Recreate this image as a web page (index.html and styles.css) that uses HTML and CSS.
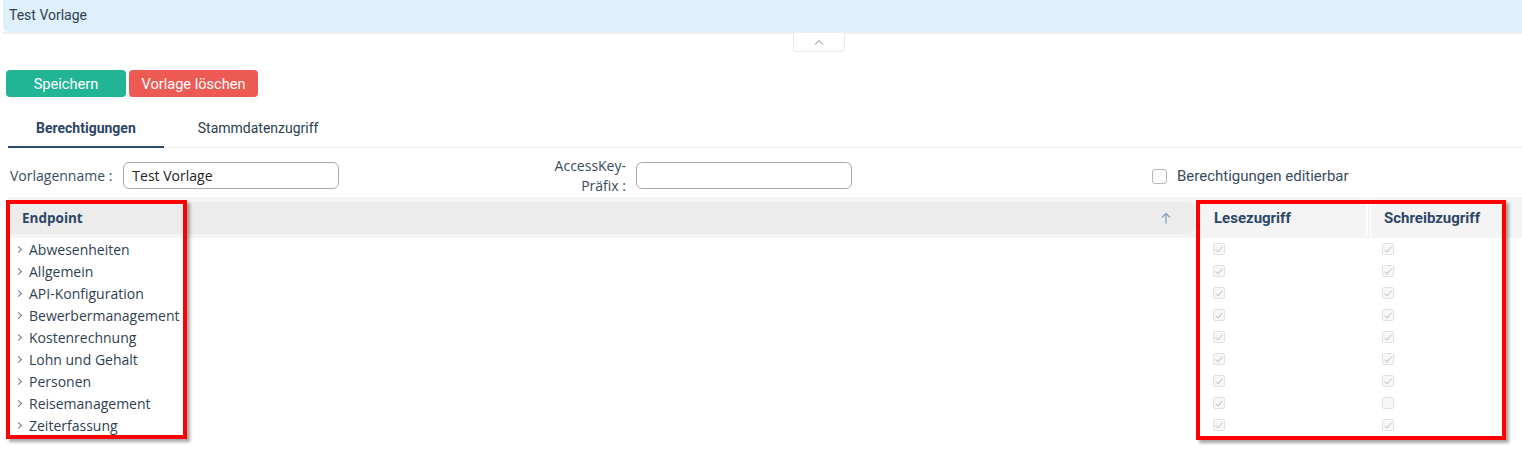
FILE: index.html
```html
<!DOCTYPE html>
<html lang="de">
<head>
<meta charset="utf-8">
<title>Test Vorlage</title>
<link rel="stylesheet" href="styles.css">
</head>
<body>
<div class="page">
  <div class="topbar"><span class="topbar-title">Test Vorlage</span></div>
  <div class="collapse-row">
    <div class="collapse-tab">
      <svg width="10" height="6" viewBox="0 0 10 6"><polyline points="1,5.5 5,1.5 9,5.5" fill="none" stroke="#7a8797" stroke-width="1"/></svg>
    </div>
  </div>

  <div class="actions">
    <button class="btn btn-save">Speichern</button>
    <button class="btn btn-delete">Vorlage löschen</button>
  </div>

  <div class="tabs">
    <div class="tab tab-active">Berechtigungen</div>
    <div class="tab tab-second">Stammdatenzugriff</div>
  </div>

  <div class="form-row">
    <div class="field field-name">
      <label class="field-label">Vorlagenname :</label>
      <div class="input">Test Vorlage</div>
    </div>
    <div class="field field-key">
      <label class="field-label label-wrap">AccessKey-<br>Präfix :</label>
      <div class="input"></div>
    </div>
    <div class="check-field">
      <span class="box"></span>
      <span class="check-label">Berechtigungen editierbar</span>
    </div>
  </div>

  <div class="grid">
    <div class="grid-head">
      <div class="th th-endpoint">
        <span>Endpoint</span>
        <svg class="sort" width="10" height="12" viewBox="0 0 10 12"><line x1="5" y1="1.5" x2="5" y2="11.5" stroke="#8ea0b3" stroke-width="1.3"/><polyline points="1,5.5 5,1.5 9,5.5" fill="none" stroke="#8ea0b3" stroke-width="1.3"/></svg>
      </div>
      <div class="th th-read">Lesezugriff</div>
      <div class="th th-write">Schreibzugriff</div>
    </div>

    <div class="grid-body">
      <div class="row"><div class="cell-name"><span class="chev"></span>Abwesenheiten</div><div class="cell-read"><span class="cbx on"></span></div><div class="cell-write"><span class="cbx on"></span></div></div>
      <div class="row"><div class="cell-name"><span class="chev"></span>Allgemein</div><div class="cell-read"><span class="cbx on"></span></div><div class="cell-write"><span class="cbx on"></span></div></div>
      <div class="row"><div class="cell-name"><span class="chev"></span>API-Konfiguration</div><div class="cell-read"><span class="cbx on"></span></div><div class="cell-write"><span class="cbx on"></span></div></div>
      <div class="row"><div class="cell-name"><span class="chev"></span>Bewerbermanagement</div><div class="cell-read"><span class="cbx on"></span></div><div class="cell-write"><span class="cbx on"></span></div></div>
      <div class="row"><div class="cell-name"><span class="chev"></span>Kostenrechnung</div><div class="cell-read"><span class="cbx on"></span></div><div class="cell-write"><span class="cbx on"></span></div></div>
      <div class="row"><div class="cell-name"><span class="chev"></span>Lohn und Gehalt</div><div class="cell-read"><span class="cbx on"></span></div><div class="cell-write"><span class="cbx on"></span></div></div>
      <div class="row"><div class="cell-name"><span class="chev"></span>Personen</div><div class="cell-read"><span class="cbx on"></span></div><div class="cell-write"><span class="cbx on"></span></div></div>
      <div class="row"><div class="cell-name"><span class="chev"></span>Reisemanagement</div><div class="cell-read"><span class="cbx on"></span></div><div class="cell-write"><span class="cbx"></span></div></div>
      <div class="row"><div class="cell-name"><span class="chev"></span>Zeiterfassung</div><div class="cell-read"><span class="cbx on"></span></div><div class="cell-write"><span class="cbx on"></span></div></div>
    </div>
  </div>

  <div class="mark mark-left"></div>
  <div class="mark mark-right"></div>
</div>
</body>
</html>
```
FILE: styles.css
```css
* { box-sizing: border-box; }
html, body { margin: 0; padding: 0; background: #fff; }
body { font-family: Roboto, "Open Sans", sans-serif; color: #2c3e50; width: 1522px; height: 449px; overflow: hidden; }
.page { position: relative; width: 1522px; height: 449px; }

.topbar {
  margin-left: 3px;
  height: 32px;
  background: #dff0fd;
  border-bottom-left-radius: 6px;
  display: flex;
  align-items: center;
  padding: 0 0 2px 6px;
}
.topbar-title { font-size: 14px; color: #2f4155; }

.collapse-row {
  margin-left: 3px;
  border-top: 2px solid #eeeeee;
  height: 20px;
  display: flex;
  padding-left: 790px;
}
.collapse-tab {
  width: 52px;
  height: 19px;
  margin-top: -1px;
  border: 1px solid #e8e8e8;
  border-top: none;
  border-radius: 0 0 4px 4px;
  background: #fff;
  display: flex;
  align-items: center;
  justify-content: center;
}

.actions { display: flex; gap: 3px; padding-left: 6px; margin-top: 18px; }
.btn {
  height: 27px;
  border: none;
  border-radius: 4px;
  color: #fff;
  font-family: Roboto, sans-serif;
  font-size: 14.6px;
  padding: 0 12px;
  cursor: pointer;
}
.btn-save { background: #21b596; width: 120px; }
.btn-delete { background: #ec5a53; width: 129px; }

.tabs {
  display: flex;
  margin: 13px 0 0 8px;
  height: 38px;
  border-bottom: 1px solid #eeeeee;
}
.tab {
  font-size: 14px;
  color: #2c3e50;
  display: flex;
  align-items: center;
  padding: 0 34px 2px;
}
.tab-active {
  font-weight: 700;
  color: #2c4565;
  padding: 0 28px 0;
  border-bottom: 2px solid #2c4a6e;
  margin-bottom: -1px;
}

.form-row {
  display: flex;
  align-items: center;
  height: 48px;
  padding: 6px 0 0 10px;
  font-family: "Open Sans", sans-serif;
}
.field { display: flex; align-items: center; }
.field-name { width: 507px; }
.field-label { font-size: 14px; color: #3a4b5e; }
.field-name .field-label { margin-right: 11px; }
.label-wrap { width: 109px; text-align: right; line-height: 20px; margin-right: 10px; padding-top: 2px; }
.input {
  width: 216px;
  height: 27px;
  border: 1px solid #a9a9a9;
  border-radius: 6px;
  font-size: 14px;
  color: #222;
  padding-left: 8px;
  display: flex;
  align-items: center;
}
.check-field { display: flex; align-items: center; margin-left: 300px; padding-top: 2px; }
.box {
  width: 15px; height: 15px;
  border: 1px solid #b8b8b8;
  border-radius: 3px;
  margin-right: 10px;
}
.check-label { font-family: Roboto, sans-serif; font-size: 15px; color: #3a4b5e; }

.grid { margin: 1px 0 0 8px; width: 1514px; }
.grid-head {
  display: grid;
  grid-template-columns: 1192px 170px 1fr;
  height: 41px;
  background: #f4f4f4;
  align-items: center;
}
.th { font-family: Roboto, sans-serif; font-weight: 700; font-size: 15px; color: #2d4766; }
.th-endpoint {
  font-family: "Open Sans", sans-serif;
  font-size: 13.5px;
  background: #ececec;
  height: 32px;
  margin-right: 5px;
  border-radius: 0 8px 8px 0;
  display: flex;
  align-items: center;
  justify-content: space-between;
  padding: 0 24px 0 14px;
}
.sort { display: block; }
.th-read {
  height: 41px;
  display: flex;
  align-items: center;
  padding-left: 14px;
  border-right: 2px solid #fff;
  border-radius: 0 6px 6px 0;
  margin-right: 2px;
}
.th-write {
  height: 41px;
  display: flex;
  align-items: center;
  padding-left: 13px;
  border-left: 1px solid #fff;
}

.row {
  display: grid;
  grid-template-columns: 1192px 170px 1fr;
  height: 22px;
  align-items: center;
}
.cell-name {
  font-family: "Open Sans", sans-serif;
  font-size: 14px;
  color: #2f3f52;
  display: flex;
  align-items: center;
  padding-left: 8px;
}
.chev {
  width: 5px; height: 5px;
  border-top: 1px solid #777;
  border-right: 1px solid #777;
  transform: rotate(45deg);
  margin-right: 8px;
  margin-top: 1px;
}
.cell-read { padding-left: 13px; display: flex; }
.cell-write { padding-left: 12px; display: flex; }
.cbx {
  width: 12px; height: 12px;
  border: 1px solid #e2e2e2;
  background: #f7f7f7;
  border-radius: 2px;
  position: relative;
}
.cbx.on::after {
  content: "";
  position: absolute;
  left: 3px; top: 1px;
  width: 3px; height: 6px;
  border-right: 1px solid #c8c8c8;
  border-bottom: 1px solid #c8c8c8;
  transform: rotate(40deg);
}

.mark {
  position: absolute;
  border: 4px solid #ff0000;
  box-shadow: 3px 3px 3px rgba(0,0,0,0.35);
  pointer-events: none;
}
.mark-left { left: 6px; top: 200px; width: 181px; height: 239px; }
.mark-right { left: 1196px; top: 200px; width: 310px; height: 240px; }
```
